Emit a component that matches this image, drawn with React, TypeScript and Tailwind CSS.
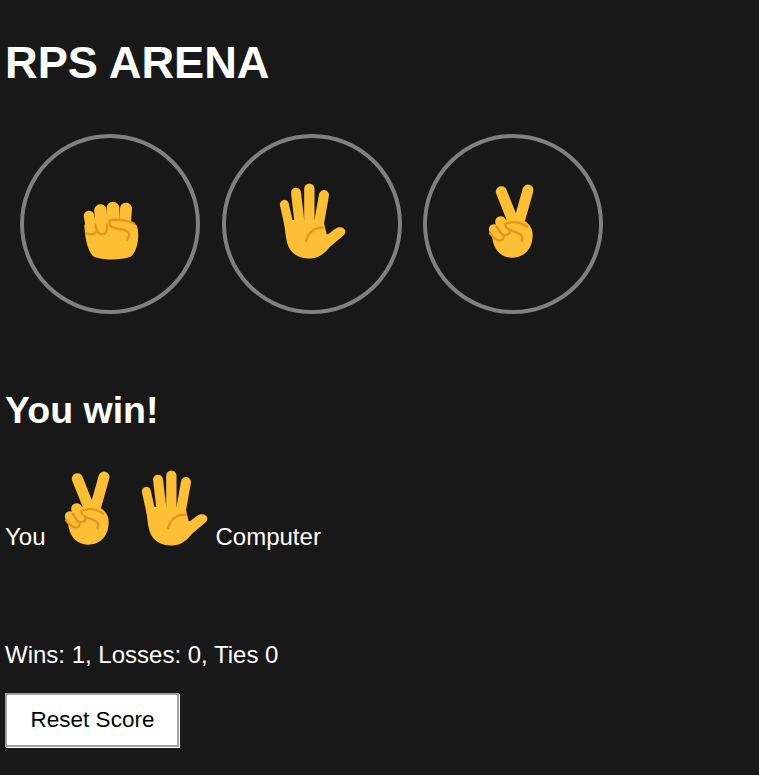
const FONT = "font-['Liberation_Sans',Arial,sans-serif]";
const SKIN = "#fdbf35";
const LINE = "#e5941c";

function RockIcon() {
  return (
    <svg width="80" height="80" viewBox="0 0 240 240" className="block shrink-0 overflow-visible">
      <g transform="translate(0 33)" fill="none" strokeLinecap="round" strokeLinejoin="round">
        <path d="M43 90C45 125 50 162 68 182C85 196 150 197 182 185C202 170 210 125 201 93C190 70 60 65 43 90Z" fill={SKIN} />
        <path d="M57 63L66 108" stroke={SKIN} strokeWidth="32" />
        <path d="M91 46L96 100" stroke={SKIN} strokeWidth="37" />
        <path d="M129 39L130 90" stroke={SKIN} strokeWidth="38" />
        <path d="M168 41L165 80" stroke={SKIN} strokeWidth="36" />
        <path d="M50 114C58 120 68 120 77 112" stroke={LINE} strokeWidth="7" />
        <path d="M76 88C78 105 85 118 97 118C108 117 113 108 111 88" stroke={LINE} strokeWidth="7" />
        <path d="M118 76C145 72 172 76 192 86M118 78C116 95 128 100 148 102C170 104 186 114 172 134" stroke={LINE} strokeWidth="7" />
      </g>
    </svg>
  );
}

function PaperIcon() {
  return (
    <svg width="80" height="80" viewBox="0 0 240 240" className="block shrink-0 overflow-visible">
      <g transform="translate(-36 -42)" fill="none" strokeLinecap="round" strokeLinejoin="round">
        <path d="M72 150C76 190 78 215 88 235C103 262 135 268 158 265C182 262 198 245 210 230L252 195C264 180 248 168 232 173C220 177 212 190 200 193L190 150Z" fill={SKIN} />
        <path d="M73 103L88 170" stroke={SKIN} strokeWidth="27" />
        <path d="M108 68L119 160" stroke={SKIN} strokeWidth="30" />
        <path d="M148 56L148 160" stroke={SKIN} strokeWidth="31" />
        <path d="M192 75L176 165" stroke={SKIN} strokeWidth="30" />
        <path d="M138 213C146 186 166 172 192 173" stroke={LINE} strokeWidth="7" />
      </g>
    </svg>
  );
}

function ScissorsIcon() {
  return (
    <svg width="80" height="80" viewBox="0 0 240 240" className="block shrink-0 overflow-visible">
      <g transform="translate(-9 -42)" fill="none" strokeLinecap="round" strokeLinejoin="round">
        <path d="M94 65L132 160" stroke={SKIN} strokeWidth="33" />
        <path d="M174 60L146 160" stroke={SKIN} strokeWidth="33" />
        <path d="M66 190C66 240 95 263 125 263C165 263 188 235 188 195C188 170 170 150 145 148L100 150Z" fill={SKIN} />
        <path d="M72 178L94 205" stroke={SKIN} strokeWidth="31" />
        <path d="M92 155L112 195" stroke={SKIN} strokeWidth="33" />
        <path d="M60 190C68 200 75 210 88 212C98 212 104 205 100 195" stroke={LINE} strokeWidth="7" />
        <path d="M80 170C88 185 95 195 104 196C114 196 122 190 118 180" stroke={LINE} strokeWidth="7" />
        <path d="M106 162C128 152 150 155 172 170M106 166C108 178 125 182 140 188C155 194 160 202 155 213" stroke={LINE} strokeWidth="7" />
      </g>
    </svg>
  );
}

const choices = [
  { name: "rock", icon: <RockIcon /> },
  { name: "paper", icon: <PaperIcon /> },
  { name: "scissors", icon: <ScissorsIcon /> },
];

export default function App() {
  return (
    <div className={`${FONT} min-h-[775px] bg-[#181818] px-[5px] text-white`}>
      <h1 className="pt-[37px] text-[45.2px] leading-[52px] font-bold">RPS ARENA</h1>

      <div className="mt-[45px] ml-[15px] flex gap-[21.5px]">
        {choices.map((choice) => (
          <button
            key={choice.name}
            type="button"
            className="flex h-[180px] w-[180px] items-center justify-center rounded-full border-4 border-[#808080]"
          >
            {choice.icon}
          </button>
        ))}
      </div>

      <h2 className="mt-[74px] text-[37.5px] leading-[44px] font-bold">You win!</h2>

      <div className="mt-[39px] flex items-end text-[24px] leading-[28px]">
        <span className="mr-[3px]">You</span>
        <ScissorsIcon />
        <span className="ml-[5px]">
          <PaperIcon />
        </span>
        <span className="ml-[2px]">Computer</span>
      </div>

      <p className="mt-[90px] text-[24px] leading-[28px]">Wins: 1, Losses: 0, Ties 0</p>

      <button
        type="button"
        className="mt-[24px] block h-[54px] w-[174px] border-2 border-[#a0a0a0] bg-white pl-[1px] text-[22.5px] text-black shadow-[1px_1px_0_#ffffff]"
      >
        Reset Score
      </button>
    </div>
  );
}
